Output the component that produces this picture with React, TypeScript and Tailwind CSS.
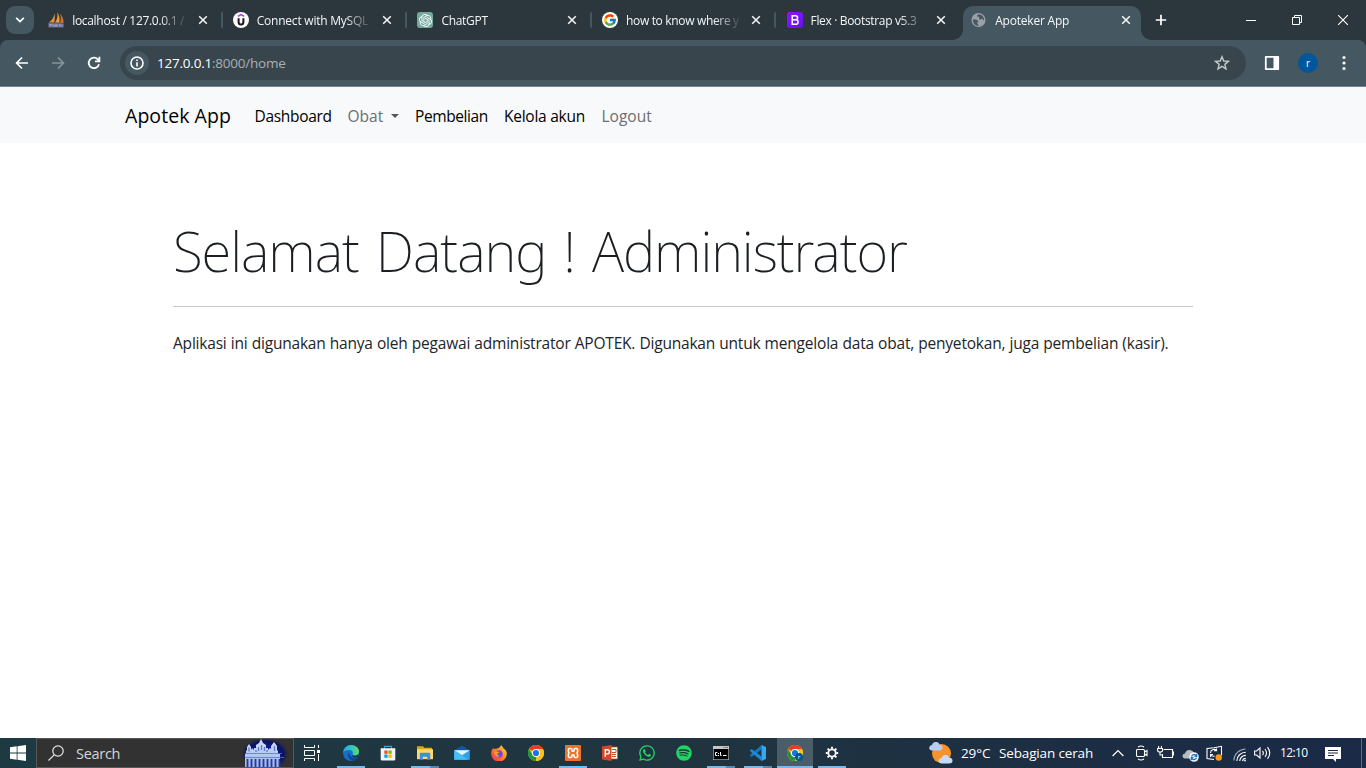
import type { ReactNode } from 'react';
import { SiOpenai } from 'react-icons/si';
import { FcGoogle } from 'react-icons/fc';
import { FaWhatsapp, FaSpotify } from 'react-icons/fa';

/* ---------- Browser tabs ---------- */

function SailIcon() {
  return (
    <svg viewBox="0 0 16 16" className="size-4">
      <path d="M6.300 1.500C6.200 5 4.200 8.500 .6 10.600L6.200 10.400C6.900 7.500 7 4 6.300 1.500Z" fill="#f0932b" />
      <path d="M9.300 .3C10 4.500 9.200 8 6.900 10.500L11.300 10.700C12 7.500 11.500 3.500 9.300 .3Z" fill="#f89c3a" />
      <path d="M11.900 1.500C13.200 4.500 13 8 12 10.700L15.600 11.200C15.800 7.500 14.500 4 11.900 1.500Z" fill="#c9742a" />
      <path d="M0 11.300C5 10.200 11 10.400 16 11.800L15.600 15.600H.6Z" fill="#62658c" />
      <path d="M2 15v-2.700h1.300v1.200M5 12v3M7 15v-2.500l1 1.200 1-1.200V15M11 12.200l.8 1.200.8-1.200M11.800 13.400V15M14 12.500V15" stroke="#c8c9dc" strokeWidth=".7" fill="none" />
    </svg>
  );
}

function UdemyIcon() {
  return (
    <svg viewBox="0 0 16 16" className="size-4">
      <circle cx="8" cy="8" r="8" fill="#fff" />
      <path d="M4.900 4.400 8 2.700l3.100 1.700" stroke="#a435f0" strokeWidth="1.500" fill="none" />
      <path d="M5.600 6.300v3.600c0 1.700 1 2.500 2.400 2.500s2.400-.8 2.400-2.500V6.300" stroke="#17171c" strokeWidth="2" fill="none" />
    </svg>
  );
}

function ChatIcon() {
  return (
    <span className="flex size-4 items-center justify-center rounded-[3px] bg-[#74aa9c] text-[13px] text-white">
      <SiOpenai />
    </span>
  );
}

function GoogleIcon() {
  return (
    <span className="flex size-4 items-center justify-center rounded-full bg-white text-[14px]">
      <FcGoogle />
    </span>
  );
}

function BootstrapIcon() {
  return (
    <span className="flex size-4 items-center justify-center rounded-[3px] bg-linear-to-br from-[#9013fe] to-[#6610f2]">
      <svg viewBox="0 0 16 16" className="size-4" fill="none" stroke="#fff" strokeWidth="1.500">
        <path d="M5.250 3.750h3.200c1.350 0 2.150.7 2.150 1.950S9.700 7.700 8.450 7.700h-3.200M5.250 7.700h3.500c1.500 0 2.350.8 2.350 2.200s-.95 2.350-2.500 2.350H5.250V3" />
      </svg>
    </span>
  );
}

function GlobeIcon() {
  return (
    <svg viewBox="0 0 16 16" className="size-4">
      <circle cx="7.500" cy="8" r="7" fill="#9aa0a6" />
      <path d="M2.100 7.500c2.700-.3 5.200.2 5.200 1.600 0 .9-1.100.9-1.100 1.800 0 .8 1.300.8 1.300 3C4.500 13.800 2.100 11.400 1.900 8.200ZM7.900 2.300c-1.300.6-2.400 1.200-2 2 .4.700 1.700.2 2.200.9.500.8-.5 1.500.4 2.100 1 .6 2-.6 2.900-.2.800.3.500 1.400 1.500 1.600C13.500 5.600 11.400 2.600 7.900 2.300Z" fill="#455862" />
    </svg>
  );
}

function Cross() {
  return (
    <svg viewBox="0 0 10 10" className="size-2.5" stroke="#f0f2f3" strokeWidth="1.600">
      <path d="M1.200 1.200 8.800 8.800M8.800 1.200 1.200 8.800" />
    </svg>
  );
}

type TabProps = { icon: ReactNode; title: string; titleClass: string; active?: boolean; divider?: boolean };

function Tab({ icon, title, titleClass, active, divider }: TabProps) {
  return (
    <div className="relative flex h-10 w-[184.600px] shrink-0 items-center pl-[10.200px]">
      {active && (
        <>
          <span className="absolute top-[6px] left-[2px] h-[34px] w-[178px] rounded-t-[10px] bg-[#455862]" />
          <span className="absolute bottom-0 -left-[8px] size-2.5 bg-[radial-gradient(circle_at_0_0,transparent_9.500px,#455862_10px)]" />
          <span className="absolute bottom-0 left-[180px] size-2.5 bg-[radial-gradient(circle_at_100%_0,transparent_9.500px,#455862_10px)]" />
        </>
      )}
      <span className="relative size-4 shrink-0">{icon}</span>
      <span className="relative ml-2 w-[114px] shrink-0 pt-px text-[12px] leading-5 whitespace-pre text-[#f4f6f7] [mask-image:linear-gradient(to_right,black_88px,transparent_116px)]">
        <span className={titleClass}>{title}</span>
      </span>
      <span className="relative ml-[11.500px]"><Cross /></span>
      {divider && <span className="ml-auto h-4 w-0.5 rounded-full bg-[#455862]" />}
    </div>
  );
}

const tabs: TabProps[] = [
  { icon: <SailIcon />, title: 'localhost / 127.0.0.1 /', titleClass: 'tracking-[-0.31px]', divider: true },
  { icon: <UdemyIcon />, title: 'Connect with MySQL', titleClass: 'tracking-[-0.23px]', divider: true },
  { icon: <ChatIcon />, title: 'ChatGPT', titleClass: 'tracking-[-0.3px]', divider: true },
  { icon: <GoogleIcon />, title: 'how to know where y', titleClass: 'tracking-[-0.33px]', divider: true },
  { icon: <BootstrapIcon />, title: 'Flex · Bootstrap v5.3', titleClass: 'tracking-[-0.34px]' },
  { icon: <GlobeIcon />, title: 'Apoteker App', titleClass: 'tracking-[-0.2px]', active: true },
];

function TabStrip() {
  return (
    <div className="flex h-10 items-center bg-[#2c373d]">
      <div className="ml-1.5 flex size-7 shrink-0 items-center justify-center rounded-[9px] bg-[#455862]">
        <svg viewBox="0 0 10 6" className="h-1.5 w-2.5" fill="none" stroke="#fff" strokeWidth="1.800">
          <path d="M1.200 .9 5 4.600 8.800.9" />
        </svg>
      </div>
      <div className="ml-1 flex">
        {tabs.map((t) => <Tab key={t.title} {...t} />)}
      </div>
      <svg viewBox="0 0 12 12" className="ml-[9.400px] size-3 shrink-0" stroke="#fff" strokeWidth="1.700">
        <path d="M6 .8v10.400M.8 6h10.400" />
      </svg>
      <div className="ml-auto flex">
        <span className="flex h-10 w-[46px] items-center justify-center"><span className="h-px w-2.5 bg-white" /></span>
        <span className="flex h-10 w-[46px] items-center justify-center">
          <svg viewBox="0 0 10 10" className="size-2.5" fill="none" stroke="#fff"><path d="M.5 2.500h7v7h-7ZM2.500 2V.5h7v7H8" /></svg>
        </span>
        <span className="flex h-10 w-[46px] items-center justify-center">
          <svg viewBox="0 0 10 10" className="size-2.5" stroke="#fff" strokeWidth="1.100"><path d="M0 0 10 10M10 0 0 10" /></svg>
        </span>
      </div>
    </div>
  );
}

function Toolbar() {
  return (
    <div className="bg-[#2c373d]">
      <div className="flex h-[46px] items-center rounded-t-lg bg-[#455862]">
        <svg viewBox="0 0 14 14" className="ml-[15px] size-3.5" fill="none" stroke="#fff" strokeWidth="1.700"><path d="M13 7H2M7 1.500 1.600 7 7 12.500" /></svg>
        <svg viewBox="0 0 14 14" className="ml-[22px] size-3.5" fill="none" stroke="#87939a" strokeWidth="1.700"><path d="M1 7h11M7 1.500 12.400 7 7 12.500" /></svg>
        <svg viewBox="0 0 14 14" className="ml-[22px] size-3.5" fill="none" stroke="#fff" strokeWidth="1.800"><path d="M12 8.200A5.200 5.200 0 1 1 10.800 3.400L12 4.700M12.400 .8v4.500H8" /></svg>
        <div className="ml-[19px] flex h-[34px] w-[1126px] items-center rounded-full bg-[#38454c] pl-[5px]">
          <span className="flex size-6 items-center justify-center rounded-full bg-[#455862]">
            <svg viewBox="0 0 14 14" className="size-3.5" fill="none" stroke="#fff" strokeWidth="1.600"><circle cx="7" cy="7" r="6" /><path d="M7 6.200v4.200M7 3.600v1.500" /></svg>
          </span>
          <span className="ml-2 text-[13.500px] leading-5 tracking-[-0.22px] text-[#a9b0b4]">
            <span className="text-white">127.0.0.1</span>:8000/home
          </span>
          <svg viewBox="0 0 16 16" className="mr-4 ml-auto size-4" fill="none" stroke="#c3c8cb" strokeWidth="1.400"><path d="m8 1.700 1.750 4.300 4.650.35-3.550 3 1.150 4.550L8 11.400l-4 2.500 1.150-4.550-3.550-3L6.250 6Z" /></svg>
        </div>
        <svg viewBox="0 0 16 16" className="ml-[18px] size-4"><path d="M1.800 1.800h12.400v12.400H1.800Z" fill="none" stroke="#fff" strokeWidth="1.800" strokeLinejoin="round" /><path d="M9.500 2H14v12H9.500Z" fill="#fff" /></svg>
        <span className="ml-[18px] flex size-5 items-center justify-center rounded-full bg-[#01579b] pb-px text-[10px] leading-none text-white">r</span>
        <svg viewBox="0 0 4 16" className="ml-[24px] h-4 w-1" fill="#fff"><circle cx="2" cy="2.500" r="1.600" /><circle cx="2" cy="8" r="1.600" /><circle cx="2" cy="13.500" r="1.600" /></svg>
      </div>
      <div className="h-px bg-[#75828b]" />
    </div>
  );
}

/* ---------- Page ---------- */

function Page() {
  return (
    <div className="flex-1 bg-white">
      <nav className="flex h-14 items-center bg-[#f8f9fa] pt-px pl-[125px] text-[15.500px] leading-6 text-black">
        <a className="w-[105.500px] text-[19.500px] leading-[30px] tracking-[0.05px] whitespace-nowrap">Apotek App</a>
        <ul className="ml-6 flex gap-4 whitespace-nowrap">
          <li className="w-[77px] tracking-[-0.32px]">Dashboard</li>
          <li className="flex w-[51.500px] items-center tracking-[0px] text-[#6c6e70]">
            Obat
            <span className="ml-auto border-x-[4.500px] border-t-[4.500px] border-x-transparent border-t-[#55585a]" />
          </li>
          <li className="w-[73px] tracking-[-0.4px]">Pembelian</li>
          <li className="w-[81.500px] tracking-[-0.25px]">Kelola akun</li>
          <li className="tracking-[0px] text-[#6c6e70]">Logout</li>
        </ul>
      </nav>
      <main className="pt-[74px] pr-[173px] pl-[173px]">
        <h1 className="h-[67px] pt-px text-[54.500px] leading-[67px] font-extralight tracking-[-1.050px] whitespace-nowrap text-[#1b1f23] [font-family:'Noto_Sans',sans-serif] [word-spacing:3.900px]">
          Selamat Datang ! Administrator
        </h1>
        <hr className="mt-[22px] border-t border-[#c7c8c9]" />
        <p className="mt-[24px] text-[15.500px] leading-6 tracking-[-0.200px] whitespace-nowrap text-[#212529] [word-spacing:0.360px]">
          Aplikasi ini digunakan hanya oleh pegawai administrator APOTEK. Digunakan untuk mengelola data obat, penyetokan, juga pembelian (kasir).
        </p>
      </main>
    </div>
  );
}

/* ---------- Taskbar ---------- */

function Palace() {
  return (
    <svg viewBox="0 0 50 28" className="h-7 w-[50px]">
      <defs>
        <radialGradient id="glow"><stop offset="0" stopColor="#1426a8" /><stop offset=".75" stopColor="#0b1264" /><stop offset="1" stopColor="#333" stopOpacity="0" /></radialGradient>
        <linearGradient id="stone" x1="0" y1="0" x2="0" y2="1"><stop offset="0" stopColor="#d3e0f8" /><stop offset="1" stopColor="#9db4ee" /></linearGradient>
      </defs>
      <ellipse cx="25" cy="15" rx="25" ry="17" fill="url(#glow)" />
      <path d="M5 28V15h1v-3l1-1V8l2-3 2 3v3l1-2 2 2V9h2V6l3-2 1-2 1-2 1 2 1 2 3 2v3h2v2l2-2 1 1V7l3-4 3 4v4l1 1v3h2v13Z" fill="url(#stone)" />
      <path d="M5 14.500h37M5 18.500h39" stroke="#5a76c8" strokeWidth=".8" />
      <path d="M7.500 20v8M11.500 20v8M15.500 20v8M19.500 20v8M23.500 20v8M27.500 20v8M31.500 20v8M35.500 20v8M39.500 20v8" stroke="#26379c" strokeWidth="1.800" />
      <path d="M9 8.500v4M18.500 8v4M21.500 6v5M24.500 8v4M34.500 7v5M16 11v2M27 11v2" stroke="#5f7bce" strokeWidth="1.300" />
    </svg>
  );
}

function EdgeIcon() {
  return (
    <svg viewBox="0 0 16 16" className="size-4">
      <defs>
        <linearGradient id="e1" x1="0" x2="1"><stop offset="0" stopColor="#2aa8e6" /><stop offset=".6" stopColor="#36c6b8" /><stop offset="1" stopColor="#65dc55" /></linearGradient>
      </defs>
      <circle cx="8" cy="8" r="8" fill="#1270c8" />
      <path d="M.1 7.500C.7 3.200 4 0 8 0c4.800 0 8 3 8 6.400 0 2.600-2 4.200-4.300 4.200-1.700 0-2.500-.6-2.500-1 0-.5.700-.7.700-1.900C9.900 6 8.200 4.900 6 4.900 3.200 4.900.9 6 .1 7.500Z" fill="url(#e1)" />
      <path d="M5.700 7.400C4 9.500 5.500 14.700 9.700 15.800c2-.4 4-1.900 4.900-3.600-3.900 1.700-7.600.2-8.900-4.800Z" fill="#0c459b" />
      <path d="M16 9c-1 1.200-2.600 1.700-4.200 1.700-1.500 0-2.500-.5-2.600-1.100-1 .3.300 3.100 3 3.100 1.300 0 2.200-.3 2.700-.6.600-1 1-2 1.100-3.100Z" fill="#22384a" />
    </svg>
  );
}

function StoreIcon() {
  return (
    <svg viewBox="0 0 16 16" className="size-4">
      <path d="M4.500 4V1.300h7V4" fill="none" stroke="#28a3dc" strokeWidth="1.200" />
      <path d="M.7 3.200h14.600v11.100q0 1.200-1.200 1.200H1.900q-1.200 0-1.200-1.200Z" fill="#f3f4f5" />
      <path d="M4.300 5.500h3.300v3.300H4.300Z" fill="#f25022" /><path d="M8.400 5.500h3.300v3.300H8.400Z" fill="#7fba00" />
      <path d="M4.300 9.500h3.300v3.300H4.300Z" fill="#00a4ef" /><path d="M8.400 9.500h3.300v3.300H8.400Z" fill="#ffb900" />
    </svg>
  );
}

function FolderIcon() {
  return (
    <svg viewBox="0 0 16 16" className="size-4">
      <path d="M0 1.200h6l1.300 1.600H15v4H0Z" fill="#e0a020" />
      <path d="M0 4.200h16v10H0Z" fill="#ffd868" />
      <path d="M2.800 14.800V8.600q0-.8.800-.8h8.800q.8 0 .8.800v6.200h-2.900v-3H5.700v3Z" fill="#3a8fe0" />
    </svg>
  );
}

function MailIcon() {
  return (
    <svg viewBox="0 0 16 16" className="size-4">
      <path d="M.2 5.300 8 .6l7.800 4.700v3H.2Z" fill="#0f56a6" />
      <path d="M.2 5.300h15.600v9.500H.2Z" fill="#2b9fe8" />
      <path d="M.2 5.300h15.600L8 10.300Z" fill="#e9f4fc" />
      <path d="M.2 5.300 8 10.300 14 14.800H.2Z" fill="#45bdf5" />
    </svg>
  );
}

function FirefoxIcon() {
  return (
    <svg viewBox="0 0 16 16" className="size-4">
      <defs><linearGradient id="ff" x1="1" y1="0" x2="0" y2="1"><stop offset="0" stopColor="#ffe645" /><stop offset=".45" stopColor="#ff8a1e" /><stop offset="1" stopColor="#f0245e" /></linearGradient></defs>
      <path d="M10 0c1.500 1.300 2 2.300 2.300 3.200 2 1 3.500 3.300 3.500 5.500A7.700 7.700 0 0 1 .2 9C0 6.600.8 4.300 2.300 2.900L3 4.200c.8-.5 1.700-.5 2.500-.4C7 3 9.800 2.500 10 0Z" fill="url(#ff)" />
      <circle cx="8" cy="9" r="3.700" fill="#7a42dc" />
      <path d="M3 6.800c1-.8 2.300-.7 3.200-.2.500.3 1.700.2 2.200.5-.4.900-1.700 1-1.900 1.800C6.300 10 7.500 11 8.700 10.700 7 13.300 3.800 11.500 3 6.800Z" fill="#ff9a24" />
    </svg>
  );
}

function ChromeIcon() {
  return (
    <svg viewBox="0 0 16 16" className="size-4">
      <circle cx="8" cy="8" r="8" fill="#fbc116" />
      <path d="M8 8 1.070 4A8 8 0 0 1 14.930 4H8Z" fill="#e63b2e" />
      <path d="M1.070 4 4.540 10 8 8 8 16A8 8 0 0 1 1.070 4Z" fill="#229342" />
      <path d="M8 16 11.460 10 11.500 4H14.930A8 8 0 0 1 8 16Z" fill="#fbc116" />
      <circle cx="8" cy="8" r="4" fill="#fff" />
      <circle cx="8" cy="8" r="3.100" fill="#1a73e8" />
    </svg>
  );
}

function ChromeProfileIcon() {
  return (
    <span className="relative block size-4">
      <ChromeIcon />
      <span className="absolute top-[8px] left-[8px] flex size-2 items-center justify-center rounded-full bg-[#01579b] pb-px text-[6px] leading-none text-white">r</span>
    </span>
  );
}

function XamppIcon() {
  return (
    <svg viewBox="0 0 16 16" className="size-4" fill="none">
      <rect width="16" height="16" rx="1" fill="#ee7228" />
      <path d="M4.700 3.500h1q1.200 0 1.200 1.200v.5q0 1.100 1.100 1.100t1.100-1.100v-.5q0-1.200 1.200-1.200h1q1.300 0 1.300 1.300v1.400q0 1.800-1.300 1.800 1.300 0 1.300 1.800v1.400q0 1.300-1.300 1.300h-1q-1.200 0-1.200-1.200v-.5Q9.100 9.700 8 9.700t-1.100 1.100v.5q0 1.200-1.200 1.200h-1q-1.300 0-1.300-1.300V9.800Q3.400 8 4.700 8 3.400 8 3.400 6.200V4.800q0-1.300 1.300-1.300Z" stroke="#fff" strokeWidth="1.600" />
    </svg>
  );
}

function PowerPointIcon() {
  return (
    <svg viewBox="0 0 16 16" className="size-4">
      <path d="M8 2h7.600v12H8Z" fill="#fff" stroke="#d24726" strokeWidth=".8" />
      <path d="M10 4.500h4v3h-4M10 9.500h4M10 11.500h4" stroke="#d24726" strokeWidth="1" fill="none" />
      <path d="M0 1.500 9.500 0v16L0 14.500Z" fill="#d24726" />
      <path d="M3.300 11.700V4.700h1.900c1.400 0 2.200.7 2.200 2s-.9 2.200-2.200 2.200H3.500" stroke="#fff" strokeWidth="1.400" fill="none" />
    </svg>
  );
}

function TerminalIcon() {
  return (
    <svg viewBox="0 0 16 14" className="h-3.5 w-4">
      <rect width="16" height="14" fill="#c4c8ca" />
      <path d="M.6 3h14.800v10.400H.6Z" fill="#000" />
      <path d="M10.500 1.500h1M12.300 1.500h1M14 1.500h1" stroke="#50565a" />
      <path d="M4.300 6.500H2.500v3h1.800M5.500 7v1M5.500 9v1M7.500 6v3.500h1M10 9.500h3.500" stroke="#fff" strokeWidth="1" fill="none" />
    </svg>
  );
}

function CodeIcon() {
  return (
    <svg viewBox="0 0 16 16" className="size-4">
      <path d="M11.500 0v4.600L1.700 12 0 10.800v-.7L11.500 0Z" fill="#0f77c2" />
      <path d="M11.500 16v-4.600L1.700 4 0 5.200v.7L11.500 16Z" fill="#1a8ad6" />
      <path d="M11.500 0 16 2v12l-4.500 2Z" fill="#35a8f0" />
    </svg>
  );
}

function GearIcon() {
  return (
    <svg viewBox="0 0 14 14" className="size-3.5" fill="none" stroke="#fff">
      <circle cx="7" cy="7" r="3.700" strokeWidth="1.800" />
      <path d="M7 .8v2M7 11.200v2M.8 7h2M11.200 7h2M2.600 2.600 4 4M10 10l1.400 1.400M11.400 2.600 10 4M4 10l-1.400 1.400" strokeWidth="1.900" />
    </svg>
  );
}

type App = { id: string; icon: ReactNode; state?: 'open' | 'multi' | 'active' };

const apps: App[] = [
  { id: 'edge', icon: <EdgeIcon />, state: 'open' },
  { id: 'store', icon: <StoreIcon /> },
  { id: 'files', icon: <FolderIcon />, state: 'multi' },
  { id: 'mail', icon: <MailIcon /> },
  { id: 'firefox', icon: <FirefoxIcon /> },
  { id: 'chrome', icon: <ChromeIcon /> },
  { id: 'xampp', icon: <XamppIcon />, state: 'open' },
  { id: 'powerpoint', icon: <PowerPointIcon /> },
  { id: 'whatsapp', icon: <FaWhatsapp className="size-[18px] text-[#25d366]" /> },
  { id: 'spotify', icon: <FaSpotify className="size-4 text-[#1ed760]" /> },
  { id: 'terminal', icon: <TerminalIcon />, state: 'multi' },
  { id: 'code', icon: <CodeIcon />, state: 'multi' },
  { id: 'chrome-profile', icon: <ChromeProfileIcon />, state: 'active' },
  { id: 'settings', icon: <GearIcon />, state: 'open' },
];

function TaskbarApp({ icon, state }: App) {
  return (
    <div className={`flex h-[30px] w-9 flex-col items-center ${state === 'active' ? 'bg-[#4b5d68]' : ''}`}>
      <div className="flex h-7 items-center justify-center pt-0.5">{icon}</div>
      {state === 'active' && <span className="h-0.5 w-9 bg-[#76b9ed]" />}
      {state === 'open' && <span className="h-0.5 w-7 bg-[#76b9ed]" />}
      {state === 'multi' && (
        <span className="flex h-0.5 w-7"><span className="w-[19px] bg-[#76b9ed]" /><span className="w-[9px] bg-[#5688b0]" /></span>
      )}
    </div>
  );
}

function Tray() {
  return (
    <div className="ml-auto flex h-[30px] items-center text-[13.500px] text-white">
      <svg viewBox="0 0 24 24" className="size-6">
        <circle cx="12.500" cy="12.500" r="9.500" fill="#f8922a" />
        <path d="M3 9.500q-3-.3-2.800-3Q.5 4 3 4q1-3.500 4.500-3 2.500.3 3.200 2.800Q13.500 4 13.500 6.700t-3 2.800Z" fill="#b9cdf0" />
        <path d="M12.500 22.500q-3-.3-2.800-3 .3-2.500 2.800-2.500 1-3.500 4.500-3 2.500.3 3.200 2.800 3.300.2 3.300 2.900t-3 2.800Z" fill="#c9daf6" />
      </svg>
      <span className="ml-2 w-[38px] tracking-[-0.1px]">29°C</span>
      <span className="w-[94px] tracking-[-0.15px] whitespace-nowrap">Sebagian cerah</span>
      <svg viewBox="0 0 12 8" className="ml-[19px] h-2 w-3" fill="none" stroke="#fff" strokeWidth="1.200"><path d="M.6 7 6 1.500 11.400 7" /></svg>
      <svg viewBox="0 0 12 16" className="ml-3 h-4 w-3" fill="none" stroke="#fff" strokeWidth="1.100"><path d="M2 2Q5 0 8 2M2 14q3 2 6 0M1.500 4.500h6q1 0 1 1v5q0 1-1 1h-6q-1 0-1-1v-5q0-1 1-1ZM8.500 7l2.500-1.500v5L8.500 9" /></svg>
      <svg viewBox="0 0 17 14" className="ml-[9px] h-3.5 w-[17px]" fill="none" stroke="#fff" strokeWidth="1.100"><path d="M6.500 3.500h9v8h-10V8M16 6h.5v3H16M1.600 0v2.500M4.400 0v2.500M.6 2.500h4.900v2q0 1.500-2.400 1.500T.6 4.500ZM3 6v3h2.500" /></svg>
      <svg viewBox="0 0 17 14" className="mt-1 ml-2 h-3.5 w-[17px]">
        <path d="M3 10.500Q.3 10 .5 7.700.8 5.500 3 5.500 4 1.500 8 2q3 .3 4 3 3.500.3 3.500 3t-2.500 2.500Z" fill="#b6bbc1" />
        <circle cx="12" cy="9" r="4.800" fill="#f2f6fa" />
        <path d="M9.500 8.500A2.700 2.700 0 0 1 14.500 8M14.500 9.700A2.700 2.700 0 0 1 9.500 10M14.700 5.800V8.300H12.500M9.300 12.300V9.700h2.200" fill="none" stroke="#1673c9" strokeWidth="1.200" />
      </svg>
      <svg viewBox="0 0 17 17" className="ml-[7px] size-[17px]">
        <path d="M8 14.500 1 13.500v-10L8 2.800l7.500-1.500v9" fill="none" stroke="#fff" strokeWidth="1.100" />
        <path d="M4.500 8A3.500 3.500 0 0 1 10.500 5.500M10.500 3.500v2.300H8M4.500 12V9.500h2.500M4.500 9.700q1.300 2 4 1.400" fill="none" stroke="#fff" strokeWidth="1.100" />
        <circle cx="12.700" cy="12.500" r="3.200" fill="#fb9a12" />
      </svg>
      <svg viewBox="0 0 14 14" className="mt-1 ml-2.5 size-3.5" fill="none" stroke="#fff" strokeWidth="1.100">
        <path d="M.8 12.500A12 12 0 0 1 12.500 1" stroke="#9aa6b3" />
        <path d="M3.800 13A9 9 0 0 1 12.800 4.200M6.700 13A6 6 0 0 1 12.800 7.400M9.500 13A3.500 3.500 0 0 1 12.800 10.300" />
        <circle cx="12" cy="12.500" r=".9" fill="#fff" stroke="none" />
      </svg>
      <svg viewBox="0 0 17 14" className="ml-[7px] h-3.5 w-[17px]" fill="none" stroke="#fff" strokeWidth="1.100"><path d="M.6 5v4h2l3.400 3V2L2.600 5ZM8.500 4.800q1.700 2.200 0 4.400M11 3q3 4 0 8M13.500 1.200q4.500 5.800 0 11.600" /></svg>
      <span className="ml-[9px] w-[28px] text-[12px] tracking-[-0.6px]">12:10</span>
      <svg viewBox="0 0 16 15" className="mt-0.5 ml-[17px] h-[15px] w-4"><path d="M0 0h16v12h-5v3L8 12H0Z" fill="#fff" /><path d="M3 3.500h10M3 6h10M3 8.500h6" stroke="#1b2a45" strokeWidth="1" /></svg>
      <span className="mr-1 ml-[20px] h-[30px] w-px bg-[#5b6b80]" />
    </div>
  );
}

function Taskbar() {
  return (
    <div className="flex h-[30px] items-center bg-linear-to-r from-[#1d3a42] via-[#20343f] to-[#1a2946]">
      <svg viewBox="0 0 16 16" className="ml-2.5 size-4" fill="#fff"><path d="M0 2.200 6.700 1.300v6.300H0ZM7.500 1.200 16 0v7.600H7.500ZM0 8.400h6.700v6.300L0 13.800ZM7.500 8.400H16V16l-8.500-1.200Z" /></svg>
      <div className="ml-2.5 flex h-[30px] w-[258px] items-center border border-[#585858] bg-[#323232] pr-[3px] pl-[11px]">
        <svg viewBox="0 0 16 16" className="size-4" fill="none" stroke="#e6e6e6" strokeWidth="1.200"><circle cx="10" cy="6" r="5.200" /><path d="M6.200 9.800.5 15.500" /></svg>
        <span className="ml-3 pt-px text-[14.500px] leading-5 tracking-[-0.3px] text-[#d6d6d6]">Search</span>
        <span className="ml-auto h-7"><Palace /></span>
      </div>
      <svg viewBox="0 0 16 16" className="mr-[13px] ml-[10px] size-4" fill="none" stroke="#fff"><path d="M.5 0v2.500h10V0M.5 16v-2.500h10V16M.5 5.500h10v5H.5ZM14.500 0v3M14.500 9v7" /><path d="M13 5h3v3h-3Z" fill="#fff" stroke="none" /></svg>
      <div className="flex gap-px">
        {apps.map((a) => <TaskbarApp key={a.id} {...a} />)}
      </div>
      <Tray />
    </div>
  );
}

export default function App() {
  return (
    <div className="flex h-[768px] w-[1366px] flex-col overflow-hidden bg-white [font-family:'Open_Sans','Noto_Sans',sans-serif]">
      <TabStrip />
      <Toolbar />
      <Page />
      <Taskbar />
    </div>
  );
}
